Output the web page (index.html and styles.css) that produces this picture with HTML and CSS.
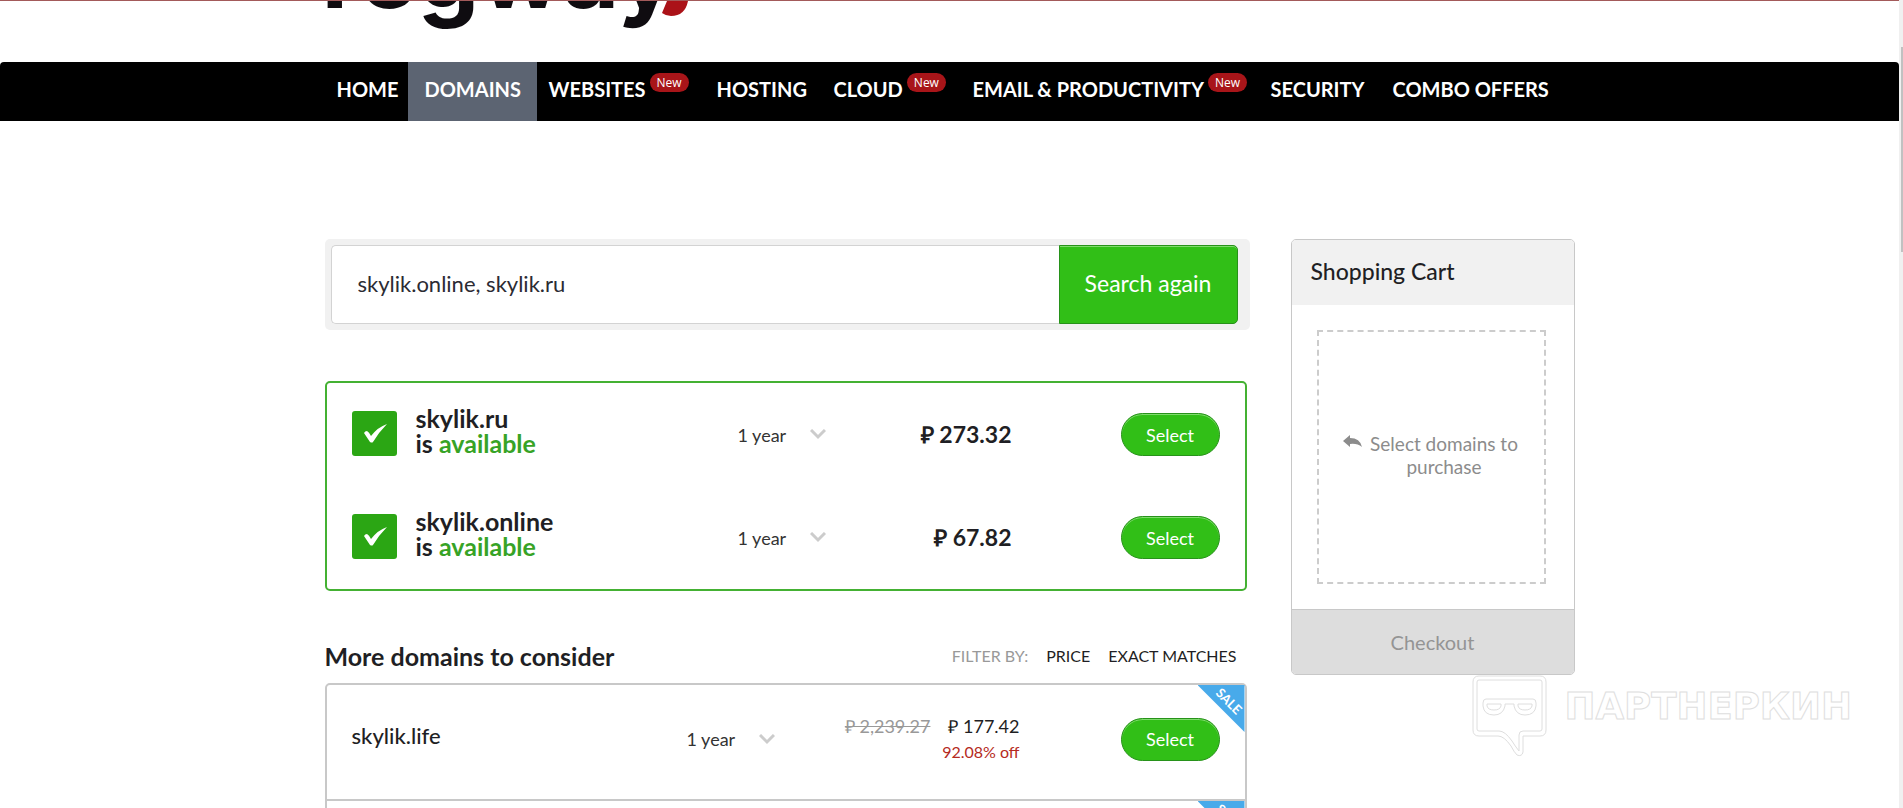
FILE: index.html
```html
<!DOCTYPE html>
<html lang="en">
<head>
    <meta charset="UTF-8">
    <meta name="viewport" content="width=device-width, initial-scale=1.0">
    <title>Regway - Domains</title>
    <link rel="stylesheet" href="styles.css">
</head>
<body>

<div class="page">
    <header class="top">
        <a href="#" class="logo">
            <span>regway</span>
            <svg class="tail" width="28" height="15" viewBox="0 0 28 15"><path d="M6 0 L27 0 Q24 15 10 15 Q5 15 1 12 Z" fill="#ab1218"/></svg>
        </a>
    </header>

    <nav class="menu">
        <ul>
            <li><a href="#">HOME</a></li>
            <li class="active"><a href="#">DOMAINS</a></li>
            <li><a href="#">WEBSITES</a><span class="new">New</span></li>
            <li><a href="#">HOSTING</a></li>
            <li><a href="#">CLOUD</a><span class="new">New</span></li>
            <li><a href="#">EMAIL &amp; PRODUCTIVITY</a><span class="new">New</span></li>
            <li><a href="#">SECURITY</a></li>
            <li><a href="#">COMBO OFFERS</a></li>
        </ul>
    </nav>

    <div class="content">
        <main>
            <form class="search">
                <input type="text" aria-label="Domain names" value="skylik.online, skylik.ru">
                <button type="button">Search again</button>
            </form>

            <section class="results">
                <div class="row">
                    <svg class="check" width="45" height="45" viewBox="0 0 45 45"><rect width="45" height="45" rx="3" fill="#2ba614"/><path d="M12 22 Q13 20 15 20 Q17 21 19 25 Q26 16 35 13 Q27 21 21 31 Q20 32 18 31 Z" fill="#fff"/></svg>
                    <h2>skylik.ru<br>is <span>available</span></h2>
                    <select aria-label="Period for skylik.ru"><option>1 year</option></select>
                    <strong class="price">₽ 273.32</strong>
                    <button type="button" class="select">Select</button>
                </div>
                <div class="row">
                    <svg class="check" width="45" height="45" viewBox="0 0 45 45"><rect width="45" height="45" rx="3" fill="#2ba614"/><path d="M12 22 Q13 20 15 20 Q17 21 19 25 Q26 16 35 13 Q27 21 21 31 Q20 32 18 31 Z" fill="#fff"/></svg>
                    <h2>skylik.online<br>is <span>available</span></h2>
                    <select aria-label="Period for skylik.online"><option>1 year</option></select>
                    <strong class="price">₽ 67.82</strong>
                    <button type="button" class="select">Select</button>
                </div>
            </section>

            <div class="more">
                <h2>More domains to consider</h2>
                <div class="filter">
                    <span>FILTER BY:</span>
                    <a href="#">PRICE</a>
                    <a href="#">EXACT MATCHES</a>
                </div>
            </div>

            <section class="list">
                <div class="item">
                    <h3>skylik.life</h3>
                    <select aria-label="Period for skylik.life"><option>1 year</option></select>
                    <div class="cost">
                        <div><del>₽ 2,239.27</del><span>₽ 177.42</span></div>
                        <small>92.08% off</small>
                    </div>
                    <button type="button" class="select">Select</button>
                    <div class="sale"><span>SALE</span></div>
                </div>
                <div class="item">
                    <div class="sale"><span>SALE</span></div>
                </div>
            </section>
        </main>

        <aside class="cart">
            <h2>Shopping Cart</h2>
            <div class="empty">
                <svg width="20" height="13" viewBox="0 0 20 13"><path d="M0 6 L7 0 V3 Q17 3 19 12 Q14 8 7 9 V12 Z" fill="#8c8c8c"/></svg>
                <p>Select domains to purchase</p>
            </div>
            <button type="button" disabled>Checkout</button>
        </aside>
    </div>
</div>

<div class="scroll"><div class="thumb"></div></div>

<div class="partner">
    <svg width="76" height="82" viewBox="0 0 76 82" fill="none" stroke="#dedede">
        <path d="M7 1 H68 Q74 1 74 7 V55 Q74 61 68 61 H51 V77 Q50 82 45 80 Q42 77 39 71 Q32 61 26 61 H7 Q1 61 1 55 V7 Q1 1 7 1 Z"/>
        <path d="M7 5 H68 Q70 5 70 7 V54 Q70 56 68 56 H51 Q47 56 47 60 V76 Q43 71 40 66 Q33 56 27 56 H7 Q5 56 5 54 V7 Q5 5 7 5 Z"/>
        <path d="M14 24 H61 Q64 24 64 28 V31 Q63 40 53 40 Q44 40 42 31 V29 H33 V31 Q31 40 22 40 Q12 40 11 31 V28 Q11 24 14 24 Z"/>
        <path d="M15 29 H29 V31 Q28 35 22 35 Q16 35 15 31 Z M46 29 H60 V31 Q59 35 53 35 Q47 35 46 31 Z"/>
    </svg>
    <span>ПАРТНЕРКИН</span>
</div>

</body>
</html>
```
FILE: styles.css
```css
*{
    box-sizing: border-box;
}
body{
    margin: 0;
    height: 100vh;
    overflow: hidden;
    display: flex;
    background-color: white;
    color: #1f1f24;
    font-family: Lato, "Liberation Sans", sans-serif;
}
h2, h3, p, ul{
    margin: 0;
    padding: 0;
}
a{
    color: inherit;
    text-decoration: none;
}
button, input, select{
    font-family: inherit;
}
.page{
    flex: 1;
    min-width: 0;
    overflow: hidden;
}

/* header */
.top{
    height: 62px;
    border-top: 1px solid #a35a5a;
    padding-left: calc(50% - 628px);
    overflow: hidden;
}
.logo{
    display: flex;
    align-items: flex-start;
    font-family: Inter, sans-serif;
    font-size: 98px;
    font-weight: 700;
    line-height: 98px;
    color: #0f0c10;
}
.logo span{
    margin-top: -77px;
}
.tail{
    margin-left: -16px;
}

/* menu */
.menu{
    background-color: black;
    border-radius: 4px 4px 0 0;
}
.menu ul{
    display: grid;
    grid-template-columns: 83px 129px 168px 117px 139px 298px 122px auto;
    width: 1250px;
    height: 59px;
    margin: 0 auto;
    list-style: none;
    color: white;
    font-size: 20px;
    font-weight: 700;
}
.menu li{
    display: flex;
    align-items: flex-start;
    gap: 4px;
    padding: 11px 0 0 12px;
    line-height: 32px;
    white-space: nowrap;
}
.menu .active{
    background-color: #5c6472;
    padding-left: 17px;
}
.new{
    background-color: #a81519;
    border-radius: 10px;
    padding: 0 7px;
    font-family: "Open Sans", sans-serif;
    font-size: 12px;
    font-weight: 400;
    line-height: 19px;
}

/* content */
.content{
    display: flex;
    justify-content: space-between;
    align-items: flex-start;
    width: 1250px;
    margin: 0 auto;
    padding-top: 118px;
}
main{
    width: 925px;
}
.search{
    display: flex;
    padding: 6px 12px 6px 6px;
    background-color: #f1f1f1;
    border-radius: 5px;
}
.search input{
    flex: 1;
    min-width: 0;
    height: 79px;
    border: 1px solid #d3d3d3;
    border-right: 0;
    border-radius: 5px 0 0 5px;
    padding: 0 26px 2px;
    font-size: 22px;
    color: #2b2b33;
}
.search button{
    width: 179px;
    background-color: #31bf17;
    border: 1px solid #27921a;
    border-radius: 0 5px 5px 0;
    box-shadow: inset 0 1px 0 #7fdb6c;
    padding: 0 0 3px;
    color: white;
    font-size: 23px;
}
.results{
    width: 922px;
    margin-top: 51px;
    border: 2px solid #44b133;
    border-radius: 5px;
}
.row{
    display: grid;
    grid-template-columns: 64px 322px 88px 1fr 208px;
    align-items: center;
    height: 103px;
    padding: 0 25px;
}
.check{
    margin-bottom: 2px;
}
.row h2{
    padding-bottom: 7px;
    font-size: 25px;
    line-height: 25px;
}
.row h2 span{
    color: #37a326;
}
select{
    width: 88px;
    height: 30px;
    border: 0;
    padding: 0;
    appearance: none;
    background: url("data:image/svg+xml,%3Csvg xmlns='http://www.w3.org/2000/svg' width='16' height='11' fill='none' stroke='%23ccc' stroke-width='3'%3E%3Cpath d='M1 1l7 7 7-7'/%3E%3C/svg%3E") right center no-repeat;
    color: #333;
    font-size: 18px;
}
.price{
    padding-bottom: 2px;
    text-align: right;
    font-size: 23px;
}
.select{
    justify-self: end;
    width: 99px;
    height: 43px;
    background-color: #31bf17;
    border: 1px solid #27921a;
    border-radius: 22px;
    box-shadow: inset 0 1px 0 #7fdb6c;
    color: white;
    font-size: 18px;
}
.more{
    display: flex;
    justify-content: space-between;
    align-items: center;
    height: 92px;
    padding: 37px 13px 0 0;
}
.more h2{
    font-size: 25px;
}
.filter{
    display: flex;
    gap: 18px;
    font-size: 16px;
}
.filter span{
    color: #999;
}
.list{
    width: 922px;
    border: 2px solid #c8c8c8;
    border-radius: 5px 5px 0 0;
}
.item{
    position: relative;
    display: grid;
    grid-template-columns: 335px 88px 1fr 200px;
    align-items: center;
    height: 116px;
    padding: 0 25px 6px;
    border-bottom: 2px solid #c8c8c8;
}
.item h3{
    padding-bottom: 8px;
    font-size: 22px;
    font-weight: 500;
}
.cost{
    text-align: right;
    font-size: 18px;
    line-height: 25px;
}
.cost del{
    color: #999;
    margin-right: 18px;
}
.cost small{
    display: block;
    font-size: 16px;
    color: #b52a22;
}
/* corner ribbon */
.sale{
    position: absolute;
    top: 0;
    right: 0;
    width: 47px;
    height: 47px;
    background-color: #48aaea;
    clip-path: polygon(0 0, 100% 0, 100% 100%);
    color: white;
    font-size: 13px;
    font-weight: 700;
}
.sale span{
    position: absolute;
    top: 8px;
    right: 0;
    transform: rotate(45deg);
}

/* cart */
.cart{
    width: 284px;
    border: 1px solid #c8c8c8;
    border-radius: 5px;
    overflow: hidden;
}
.cart h2{
    background-color: #f1f1f1;
    padding: 0 19px 2px;
    font-size: 23px;
    font-weight: 500;
    line-height: 63px;
}
.empty{
    display: flex;
    justify-content: center;
    align-items: center;
    gap: 6px;
    height: 254px;
    margin: 25px 28px 25px 25px;
    padding-bottom: 5px;
    border: 2px dashed #ccc;
    color: #8c8c8c;
    font-size: 19px;
    line-height: 23px;
    text-align: center;
}
.empty svg{
    margin-bottom: 26px;
}
.empty p{
    width: 150px;
}
.cart button{
    display: block;
    width: 100%;
    height: 65px;
    background-color: #ddd;
    border: 0;
    border-top: 1px solid #c8c8c8;
    color: #949494;
    font-size: 20px;
}

/* scrollbar */
.scroll{
    width: 4px;
    background-color: #f0f0f0;
}
.thumb{
    height: 205px;
    margin: 47px 0 0 2px;
    background-color: #c1c1c1;
}

/* partner mark over the page */
.partner{
    position: absolute;
    right: 51px;
    bottom: 51px;
    display: flex;
    gap: 17px;
    font-family: "DejaVu Sans", sans-serif;
    font-size: 37px;
    font-weight: 700;
    line-height: 64px;
    color: white;
    -webkit-text-stroke: 1px #dedede;
}
```
